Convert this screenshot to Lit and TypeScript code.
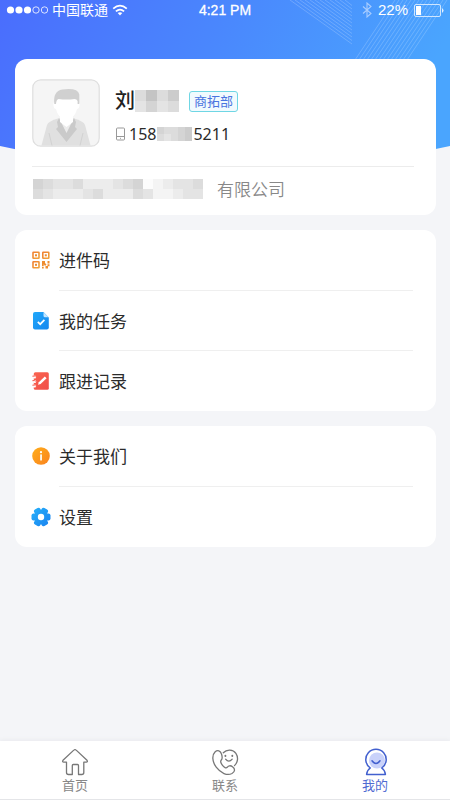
import { LitElement, html, svg, css } from "lit";
import { customElement, property } from "lit/decorators.js";
import { classMap } from "lit/directives/class-map.js";

const icons: Record<string, unknown> = {
  qr: html`<svg viewBox="0 0 18 18" width="18" height="18" aria-hidden="true">
    <defs><linearGradient id="q" x2="1" y2="1"><stop stop-color="#f08030" /><stop offset="1" stop-color="#efa23a" /></linearGradient></defs>
    <g fill="none" stroke="url(#q)" stroke-width="1.6">
      <rect x="1" y="1.300" width="6" height="6" rx=".5" /><rect x="10.800" y="1.300" width="6" height="6" rx=".5" /><rect x="1" y="10.800" width="6" height="6" rx=".5" />
    </g>
    <g fill="#ee8c30"><rect x="3" y="3.300" width="2" height="2" /><rect x="12.800" y="3.300" width="2" height="2" /><rect x="3" y="12.800" width="2" height="2" />
      <path d="M10 10h3v2l1.500 1.500L13 15l-1.300-1.800v1.800H10zM15.500 10h2v2.400h-2zM10 15.800h1.700v1.800H10zM13.500 15h2v-1.800h2v2H16v2.400h-2.500z" /></g>
  </svg>`,
  task: html`<svg viewBox="0 0 18 18" width="18" height="18" aria-hidden="true">
    <defs><linearGradient id="t" x2="1" y2="1"><stop stop-color="#20a8fa" /><stop offset="1" stop-color="#1787ee" /></linearGradient></defs>
    <path d="M3 0h8.500L16.800 5.500V15.500a2 2 0 0 1-2 2H3a2 2 0 0 1-2-2V2a2 2 0 0 1 2-2z" fill="url(#t)" />
    <path d="M11.500.3 16.500 5.300h-3.500a1.500 1.500 0 0 1-1.500-1.500z" fill="#c4e6ff" />
    <path d="m5.800 9.800 2.400 2.400 4.200-4.400" fill="none" stroke="#fff" stroke-width="1.700" />
  </svg>`,
  note: html`<svg viewBox="0 0 18 18" width="18" height="18" aria-hidden="true">
    <defs><linearGradient id="n" x2="1" y2="1"><stop stop-color="#fa6450" /><stop offset="1" stop-color="#f04e4a" /></linearGradient></defs>
    <rect x="1.800" y=".3" width="15" height="17.400" rx="1.500" fill="url(#n)" />
    <g fill="#fff"><circle cx="2.600" cy="5" r="1.600" /><circle cx="2.600" cy="9.500" r="1.600" /><circle cx="2.600" cy="14" r="1.600" /></g>
    <path d="M.4 4.200q2.400-.6 3.200.6M.4 8.700q2.400-.6 3.200.6M.4 13.200q2.400-.6 3.200.6" fill="none" stroke="#f45a4d" />
    <path d="m6 12.700.8-2.500 6-5.800 1.800 1.900-6 5.800z" fill="#fff" />
  </svg>`,
  info: html`<svg viewBox="0 0 18 18" width="18" height="18" aria-hidden="true">
    <defs><linearGradient id="i" x2="1" y2="1"><stop stop-color="#ffae1a" /><stop offset="1" stop-color="#f9821f" /></linearGradient></defs>
    <circle cx="9" cy="9" r="8.800" fill="url(#i)" />
    <circle cx="9" cy="5.200" r="1.100" fill="#fff" /><rect x="8.200" y="7.300" width="1.700" height="6.200" rx=".6" fill="#fff" />
  </svg>`,
  gear: html`<svg viewBox="0 0 18 18" width="18" height="18" overflow="visible" aria-hidden="true">
    <defs>
      <linearGradient id="g" x2="1" y2="1"><stop stop-color="#24b2fb" /><stop offset="1" stop-color="#1b80ee" /></linearGradient>
      <mask id="teeth" maskUnits="userSpaceOnUse" x="-1" y="-1" width="20" height="20">
        <g fill="#fff">
          <rect x="-.5" y="5.500" width="19" height="7" rx="2" />
          <rect x="-.5" y="5.500" width="19" height="7" rx="2" transform="rotate(60 9 9)" />
          <rect x="-.5" y="5.500" width="19" height="7" rx="2" transform="rotate(120 9 9)" />
          <circle cx="9" cy="9" r="7" />
        </g>
        <circle cx="9" cy="9" r="3.200" fill="#000" />
      </mask>
    </defs>
    <rect x="-1" y="-1" width="20" height="20" fill="url(#g)" mask="url(#teeth)" />
  </svg>`,
  home: html`<svg viewBox="0 0 28 28" width="28" height="28" aria-hidden="true" fill="none" stroke="#777" stroke-width="1.300" stroke-linejoin="round" stroke-linecap="round">
    <path d="M14 1.600q.7 0 1.200.5L26 12.300q1.100 1.600-.8 1.900h-2.400v10.300q0 2-2 2h-3.300v-9q0-1-1-1h-4.200q-1 0-1 1v9H7.500q-2 0-2-2V14.200H2.800q-1.900-.3-.8-1.900L12.800 2.100q.5-.5 1.200-.5z" />
  </svg>`,
  contact: html`<svg viewBox="0 0 28 28" width="28" height="28" aria-hidden="true" fill="none" stroke="#777" stroke-width="1.300" stroke-linejoin="round" stroke-linecap="round">
    <path d="M10.500 6C9.500 2.600 6.500 1.800 4.200 3.800.8 7 1 13.500 5.200 19.200c4.500 6 11 8.800 15.800 6.300 3.200-1.800 3.200-4.800.8-6.600-2.300-1.700-4.300-1.400-5.600.4-1.200 1.200-2.900.2-4.700-2-1.800-2.300-2.500-4-1.200-5.300 1.600-1.600 1-3.500.2-6z" />
    <path d="M12.300 4.800C16 .8 22 1.400 24.900 5.400c2.700 4 1.900 9-1.400 12.200" />
    <path d="M14.600 11.200q3.200 4 6.600 0" /><path d="M14.400 7.700v.3M21.300 7.700v.3" stroke-width="1.900" />
  </svg>`,
  mine: html`<svg viewBox="0 0 28 28" width="28" height="28" aria-hidden="true" fill="none" stroke="#4260cf" stroke-width="1.500" stroke-linejoin="round" stroke-linecap="round">
    <circle cx="16" cy="12.500" r="8" fill="#c9d2fa" stroke="none" />
    <path d="M9.300 20A10.200 10.200 0 1 1 20.700 20Q24 22.200 24.400 26.400H5.600Q6 22.200 9.300 20z" />
    <path d="M11 12.800q4 5.500 8 0" />
  </svg>`,
};

/** A strip of blurred-out characters, drawn as grey tiles. */
@customElement("masked-text")
class MaskedText extends LitElement {
  @property() tiles = "";
  @property({ type: Number }) columns = 1;
  @property({ type: Number }) size = 10;

  static styles = css`
    :host { display: inline-flex; }
    svg { display: block; }
  `;

  render() {
    const rows = this.tiles.length / this.columns;
    const w = this.columns * this.size;
    const h = rows * this.size;
    return html`<svg width=${w} height=${h} shape-rendering="crispEdges" aria-hidden="true">
      ${[...this.tiles].map((c, i) => {
        const v = 180 + Number(c) * 8;
        return svg`<rect x=${(i % this.columns) * this.size} y=${Math.floor(i / this.columns) * this.size}
          width=${this.size} height=${this.size} fill=${`rgb(${v},${v},${v})`} />`;
      })}
    </svg>`;
  }
}

@customElement("app-root")
class AppRoot extends LitElement {
  private groups = [
    [
      { icon: "qr", label: "进件码" },
      { icon: "task", label: "我的任务" },
      { icon: "note", label: "跟进记录" },
    ],
    [
      { icon: "info", label: "关于我们" },
      { icon: "gear", label: "设置" },
    ],
  ];

  private tabs = [
    { icon: "home", label: "首页", active: false },
    { icon: "contact", label: "联系", active: false },
    { icon: "mine", label: "我的", active: true },
  ];

  static styles = css`
    :host {
      display: flex;
      flex-direction: column;
      position: relative;
      min-height: 100vh;
      background: #f4f5f8;
      color: #2b2b2b;
      font-family: "Liberation Sans", "Noto Sans CJK SC", sans-serif;
    }
    * { box-sizing: border-box; }
    svg { display: block; flex: none; }
    .hero {
      position: absolute;
      inset: 0 0 auto;
      height: 172px;
      width: 100%;
    }
    .status {
      position: relative;
      display: grid;
      grid-template-columns: 1fr auto 1fr;
      align-items: center;
      height: 20px;
      padding: 0 6px;
      color: #fff;
      font-size: 14px;
      line-height: 20px;
    }
    .side { display: flex; align-items: center; gap: 4px; }
    .right { justify-content: flex-end; gap: 6px; font-size: 15px; }
    .time { -webkit-text-stroke: 0.3px #fff; }
    main {
      position: relative;
      flex: 1;
      display: flex;
      flex-direction: column;
      gap: 15px;
      padding: 39px 14px 24px 15px;
    }
    .card { background: #fff; border-radius: 12px; }
    .profile { padding: 20px 22px 0 17px; }
    .person { display: flex; gap: 15px; height: 87px; }
    .details { display: flex; flex-direction: column; gap: 9px; padding-top: 8px; }
    .line { display: flex; align-items: center; }
    h1 { margin: 0; font-size: 20px; font-weight: 500; line-height: 28px; color: #222; }
    .tag {
      margin-left: 10px;
      padding: 0 4px;
      border: 1px solid #6fd6e4;
      border-radius: 3px;
      background: #f1fafe;
      color: #4a74e0;
      font-size: 13px;
      line-height: 19px;
    }
    .phone { gap: 1px; font-family: "Noto Sans", sans-serif; font-size: 16px; line-height: 20px; }
    .phone svg { margin-right: 2px; }
    .company {
      display: flex;
      align-items: center;
      gap: 14px;
      height: 49px;
      margin: 0;
      padding: 0 0 4px 1px;
      border-top: 1px solid #ececec;
      color: #888;
      font-size: 17px;
      font-weight: 350;
    }
    .company span { padding-bottom: 2px; }
    ul { list-style: none; margin: 0; padding: 0 23px 1px 17px; }
    li { height: 60px; }
    li + li::before {
      content: "";
      display: block;
      height: 1px;
      margin-left: 27px;
      background: #efefef;
    }
    button {
      display: flex;
      align-items: center;
      gap: 9px;
      width: 100%;
      height: 60px;
      padding: 0;
      border: 0;
      background: none;
      color: #2b2b2b;
      font: inherit;
      font-size: 17px;
      cursor: pointer;
    }
    button span { padding-bottom: 2px; }
    nav {
      position: relative;
      display: flex;
      height: 59px;
      background: #fff;
      border-bottom: 1px solid #e4e5e8;
      box-shadow: 0 -1px 4px #e9eaee;
    }
    nav a {
      flex: 1;
      display: flex;
      flex-direction: column;
      align-items: center;
      gap: 1px;
      padding-top: 7px;
      color: #888;
      font-size: 13px;
      line-height: 18px;
      text-decoration: none;
    }
    nav a.active { color: #4f6bd2; }
  `;

  private hero() {
    const left = Array.from({ length: 12 }, (_, i) => `M${290 + i * 5} 0l${62 - i * 5} ${44 - i * 3.5}`).join("");
    const right = Array.from({ length: 14 }, (_, i) => `M${355 + i * 4} 60l40-60`).join("");
    return html`<svg class="hero" viewBox="0 0 450 172" preserveAspectRatio="none" aria-hidden="true">
      <defs><linearGradient id="sky" x2="1" y2=".2">
        <stop stop-color="#4a6dfd" /><stop offset=".5" stop-color="#4a87fd" /><stop offset="1" stop-color="#4aa5fe" />
      </linearGradient></defs>
      <path d="M0 0h450v146Q225 196 0 146z" fill="url(#sky)" />
      <path d="${left}${right}" fill="none" stroke="#fff" stroke-opacity=".2" />
    </svg>`;
  }

  render() {
    return html`
      ${this.hero()}
      <header class="status">
        <div class="side">
          <svg width="42" height="10" viewBox="0 0 42 10" aria-hidden="true">
            <g fill="#fff"><circle cx="4.500" cy="5" r="3.600" /><circle cx="13" cy="5" r="3.600" /><circle cx="21.500" cy="5" r="3.600" /></g>
            <g fill="none" stroke="#fff" stroke-width=".8"><circle cx="30" cy="5" r="3.200" /><circle cx="38.500" cy="5" r="3.200" /></g>
          </svg>
          <span>中国联通</span>
          <svg width="16" height="12" viewBox="0 0 16 12" aria-hidden="true" fill="none" stroke="#fff" stroke-width="1.800">
            <path d="M1.200 4.600q6.800-6 13.600 0M3.900 7.400q4.100-3.500 8.200 0" /><path d="m8 11.500-2.300-2.400q2.300-1.800 4.600 0z" fill="#fff" stroke="none" />
          </svg>
        </div>
        <span class="time">4:21 PM</span>
        <div class="side right">
          <svg width="10" height="16" viewBox="0 0 10 16" aria-hidden="true" fill="none" stroke="#a9cdff" stroke-width="1.100"><path d="m1 4.500 8 7-4 3.500V1l4 3.500-8 7" /></svg>
          <span>22%</span>
          <svg width="30" height="13" viewBox="0 0 30 13" aria-hidden="true"><rect x=".5" y=".5" width="26" height="12" rx="1.500" fill="none" stroke="#cfe6ff" /><rect x="2" y="2" width="5" height="9" fill="#fff" /><path d="M28 4q3 2.500 0 5z" fill="#e7f2ff" /></svg>
        </div>
      </header>
      <main>
        <section class="card profile">
          <div class="person">
            <svg width="68" height="68" viewBox="0 0 68 68" role="img" aria-label="头像">
              <rect x=".8" y=".8" width="66.400" height="66.400" rx="8" fill="#f5f5f5" stroke="#dedede" stroke-width="1.200" />
              <path d="M9.500 66.500 15 46Q16.500 42 26 39.500H42Q51.500 42 53 46L58.500 66.500z" fill="#e0e0e0" />
              <path d="M28 39.500h13l-6.500 20z" fill="#ececec" />
              <path d="M27 39 34.500 54 42 39l2 4-1 5 2 2-10.500 13L24 50l2-2-1-5z" fill="#cacaca" />
              <path d="M28.500 38 34.500 51 40.500 38z" fill="#ececec" />
              <path d="M28 34h13v9l-6.500 5-6.500-5z" fill="#fff" />
              <path d="M23 18h23v5q2 0 1.600 3-.4 4-2.600 4-1.500 6-5 8.500-5.500 3.800-11 0-3.500-2.500-5-8.500-2.200 0-2.600-4-.4-3 1.600-3z" fill="#fff" />
              <path d="M22.300 25q-1.500-13 8-14.500 15.500-2 17 5V25h-1.700v-3q-1-2-3-2-8 1-16 0-2.300.5-2.600 5z" fill="#d0d0d0" />
              <path d="m17 54 3 12.500M51 54l-3 12.500" stroke="#d2d2d2" />
            </svg>
            <div class="details">
              <div class="line">
                <h1>刘</h1>
                <masked-text tiles="52536465" columns="4" size="11"></masked-text>
                <span class="tag">商拓部</span>
              </div>
              <div class="line phone">
                <svg width="11" height="14" viewBox="0 0 11 14" aria-hidden="true" fill="none" stroke="#999"><rect x="1.500" y="1" width="8" height="12" rx="1" /><path d="M1.500 9.500h8M5 11.300h1" /></svg>
                <span>158</span>
                <masked-text tiles="4554356543" columns="5" size="7"></masked-text>
                <span>5211</span>
              </div>
            </div>
          </div>
          <p class="company">
            <masked-text tiles="4566577765498766556777657775688766" columns="17" size="10"></masked-text>
            <span>有限公司</span>
          </p>
        </section>
        ${this.groups.map(
          (rows) => html`<ul class="card">
            ${rows.map((r) => html`<li><button type="button">${icons[r.icon]}<span>${r.label}</span></button></li>`)}
          </ul>`,
        )}
      </main>
      <nav>
        ${this.tabs.map(
          (t) => html`<a href="#" class=${classMap({ active: t.active })}>${icons[t.icon]}<span>${t.label}</span></a>`,
        )}
      </nav>
    `;
  }
}
